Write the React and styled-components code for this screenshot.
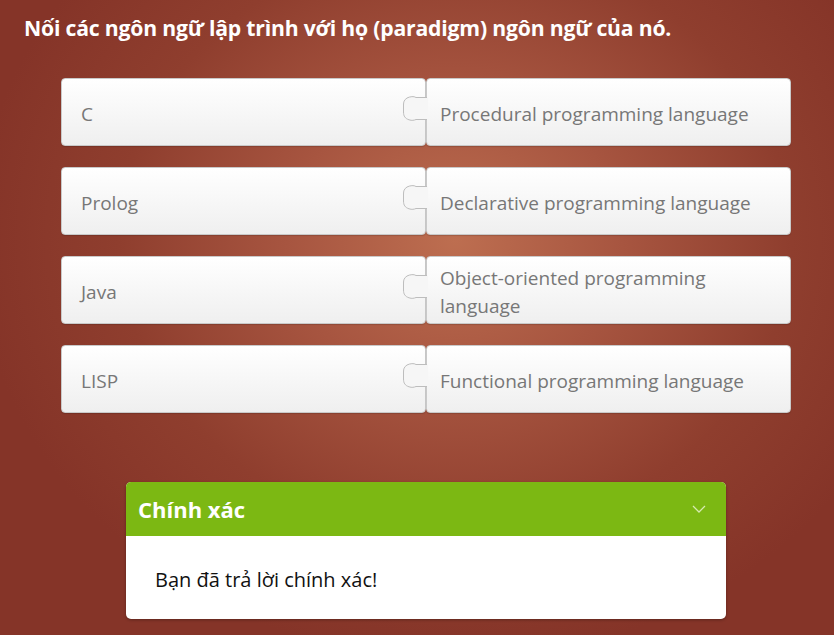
import React from 'react'
import styled, { createGlobalStyle } from 'styled-components'

const GlobalStyle = createGlobalStyle`
html, body {
  margin: 0;
  padding: 0;
}
body {
  font-family: "Open Sans", "Liberation Sans", sans-serif;
}
`

const Page = styled.div`
width: 834px;
height: 635px;
overflow: hidden;
box-sizing: border-box;
padding: 14px 0 0 0;
background: radial-gradient(ellipse 480px 420px at 455px 240px, #bd6e50 0%, #a75540 35%, #8f3e2e 70%, #853428 100%);
`

const Title = styled.h1`
margin: 0 0 0 24px;
font-size: 21.2px;
font-weight: 700;
color: #fff;
letter-spacing: -0.2px;
line-height: 28px;
`

const Board = styled.div`
width: 730px;
margin: 36px 0 0 61px;
display: flex;
flex-direction: column;
gap: 21px;
`

const Row = styled.div`
display: grid;
grid-template-columns: 365px 365px;
height: 68px;
`

const Card = styled.div`
position: relative;
box-sizing: border-box;
display: flex;
align-items: center;
border: 1px solid #c9c9c9;
border-radius: 4px;
background: linear-gradient(#ffffff, #efefef);
box-shadow: 0 1px 1px rgba(0, 0, 0, 0.15);
color: #777;
font-size: 19px;
line-height: 28px;
padding: ${p => (p.$side === 'right' ? '3px 20px 0 13px' : '3px 20px 0 19px')};
`

const Tab = styled.svg`
position: absolute;
left: -25px;
top: 16px;
width: 27px;
height: 28px;
overflow: visible;
`

const Feedback = styled.div`
width: 600px;
margin: 69px 0 0 126px;
border-radius: 5px;
overflow: hidden;
background: #fff;
box-shadow: 0 1px 3px rgba(0, 0, 0, 0.3);
`

const FeedbackHead = styled.div`
height: 54px;
display: flex;
align-items: center;
justify-content: space-between;
padding: 0 20px 0 12px;
background: #7cb813;
color: #fff;
font-size: 22px;
font-weight: 700;
`

const FeedbackBody = styled.div`
height: 83px;
box-sizing: border-box;
padding: 30px 30px 0 29px;
font-size: 20px;
color: #111;
`

const pairs = [
  ['C', 'Procedural programming language'],
  ['Prolog', 'Declarative programming language'],
  ['Java', 'Object-oriented programming language'],
  ['LISP', 'Functional programming language'],
]

const Connector = () => (
  <Tab viewBox="0 0 27 28">
    <path
      d="M26 2.5 H14 C12 1 8 1.5 5 3 C2 5 1.5 7 1.5 10 V17 C1.5 21 3 23.5 7 24.8 C10 25.8 12 25.3 14 24.5 H26 Z"
      fill="#f6f6f6"
    />
    <path
      d="M25 2.5 H14 C12 1 8 1.5 5 3 C2 5 1.5 7 1.5 10 V17 C1.5 21 3 23.5 7 24.8 C10 25.8 12 25.3 14 24.5 H25"
      fill="none"
      stroke="#bdbdbd"
      strokeWidth="1"
    />
  </Tab>
)

const App = () => {
  return (
    <Page>
      <GlobalStyle />
      <Title>Nối các ngôn ngữ lập trình với họ (paradigm) ngôn ngữ của nó.</Title>
      <Board>
        {pairs.map(([lang, kind]) => (
          <Row key={lang}>
            <Card $side="left">{lang}</Card>
            <Card $side="right">
              <Connector />
              {kind}
            </Card>
          </Row>
        ))}
      </Board>
      <Feedback>
        <FeedbackHead>
          Chính xác
          <svg width="14" height="8" viewBox="0 0 14 8">
            <path d="M1 1 L7 7 L13 1" fill="none" stroke="#d6eab0" strokeWidth="1.3" />
          </svg>
        </FeedbackHead>
        <FeedbackBody>Bạn đã trả lời chính xác!</FeedbackBody>
      </Feedback>
    </Page>
  )
}

export default App
